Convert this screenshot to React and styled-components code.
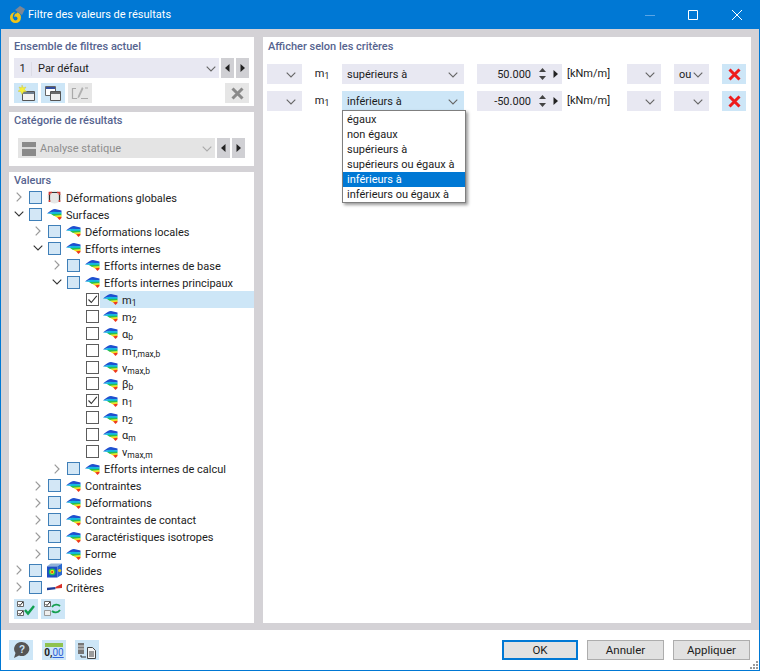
import React from "react";
import styled, {createGlobalStyle} from "styled-components";

const GlobalStyle = createGlobalStyle`
  html, body {
    margin: 0;
    padding: 0;
    background: #fff;
  }
  body {
    font-family: Roboto, "Noto Sans", sans-serif;
    font-size: 11px;
    color: #1c1c1c;
  }
`;

const Chevron = ({color = "#666", size = 10}) => (
  <svg width={size} height={size * 0.6} viewBox="0 0 10 6">
    <path d="M.7.7 5 5 9.3.7" fill="none" stroke={color} strokeWidth="1.1" />
  </svg>
);

const Tri = ({left, color = "#222"}) => (
  <svg width="5" height="8" viewBox="0 0 5 8">
    <path d={left ? "M4.5 0v8L0 4z" : "M.5 0v8L5 4z"} fill={color} />
  </svg>
);

const SurfaceIcon = () => (
  <svg width="15" height="12" viewBox="0 0 15 12">
    <path d="M0 5.500C3 3 6 1 8 1l6.500 1.500v2L6 4z" fill="#1f4fd0" />
    <path d="M0 5.500 6 3.800l8.500.4V6L5 6z" fill="#12b8e0" />
    <path d="M4 6l10.500-.2v1.700L7 8z" fill="#27c24c" />
    <path d="M7 7.800l7.500-.5V9L10 9.500z" fill="#f3e21c" />
    <path d="M10 9.300l4.500-.5V10L12.500 12z" fill="#ee3a1c" />
  </svg>
);

const FrameIcon = () => (
  <svg width="15" height="14" viewBox="0 0 15 14">
    <ellipse cx="7.5" cy="7" rx="7" ry="6.5" fill="#e6e6e6" />
    <path d="M2.5 12V2.5h10V12" fill="none" stroke="#333" strokeWidth="1.2" />
    <path d="M2.5 5V2.5H5M10 2.5h2.500V5M2.500 10v2M12.500 10v2" fill="none" stroke="#d23a34" strokeWidth="1.6" />
  </svg>
);

const SolidIcon = () => (
  <svg width="16" height="15" viewBox="0 0 16 15">
    <path d="M0 3h11v12H0z" fill="#1d4fc4" />
    <path d="M0 3l4-3h12l-5 3z" fill="#8fb2d8" />
    <path d="M11 3l5-3v12l-5 3z" fill="#2a6ad0" />
    <circle cx="5.500" cy="9" r="3.600" fill="#21c05a" />
    <circle cx="5.500" cy="9" r="2.200" fill="#f2dc1e" />
    <circle cx="5.500" cy="9" r="1.100" fill="#e43320" />
    <circle cx="13.500" cy="7.500" r="1.700" fill="#e8c81e" />
  </svg>
);

const CriteriaIcon = () => (
  <svg width="16" height="8" viewBox="0 0 16 8">
    <path d="M0 4.800 9 4v2.400L0 7.500z" fill="#1f3f9a" />
    <path d="M9 4l7-3.600V5L9 5.500z" fill="#d8312a" />
  </svg>
);

const StackIcon = () => (
  <svg width="16" height="15" viewBox="0 0 16 15">
    <path d="M.5.500h10v9h-10z" fill="#fff" stroke="#666" />
    <path d="M1 1h9v2H1z" fill="#334f9f" />
    <path d="M5.500 5.500h10v9h-10z" fill="#eee" stroke="#555" />
    <path d="M6 6h9v2H6z" fill="#6a6a6a" />
  </svg>
);

const NewIcon = () => (
  <svg width="18" height="16" viewBox="0 0 18 16">
    <path d="M5.500 6.500h12v9h-12z" fill="#f1f1f1" stroke="#555" />
    <path d="M6 7h11v2H6z" fill="#6f7f90" />
    <path d="M5 0l1.100 2.800L9 2 7.300 4.600 9.500 6.500 6.600 6.700 5 9.500 3.800 6.700 1 6.300l2.200-2L2 2l2.600.800z" fill="#f6f03a" stroke="#c8c234" strokeWidth=".4" />
  </svg>
);

const RenameIcon = () => (
  <svg width="18" height="15" viewBox="0 0 18 15">
    <path d="M5 2.500H1.500v10H6M10 12.500h7" fill="none" stroke="#aaa" strokeWidth="1.200" />
    <path d="M11 1 7 10l-.5 2.500L8.500 11l4-8.500z" fill="#b0b0b0" />
    <path d="M14 2h3" stroke="#b8b8b8" strokeWidth="1.200" />
  </svg>
);

const BigCross = ({color = "#8a8a8a"}) => (
  <svg width="13" height="13" viewBox="0 0 13 13">
    <path d="M1.500 1.500l10 10M11.500 1.500l-10 10" stroke={color} strokeWidth="3" fill="none" />
  </svg>
);

const CheckAllIcon = () => (
  <svg width="18" height="16" viewBox="0 0 18 16">
    <path d="M.5.500h6v5h-6zM.5 9.500h6v5h-6z" fill="#fff" stroke="#666" />
    <path d="M1.500 3l1.500 1.500L6 1M1.500 12l1.500 1.500L6 10" fill="none" stroke="#222" />
    <path d="M8 9l3 3.500L17 5" fill="none" stroke="#10a050" strokeWidth="2.400" />
  </svg>
);

const CheckSwapIcon = () => (
  <svg width="18" height="16" viewBox="0 0 18 16">
    <path d="M.5.500h6v5h-6z" fill="#fff" stroke="#666" />
    <path d="M.5 9.500h6v5h-6z" fill="#eee" stroke="#999" />
    <path d="M1.500 3l1.500 1.500L6 1" fill="none" stroke="#222" />
    <path d="M8 6c2-3 6-3 8-1M16 9c-2 3-6 3-8 1" fill="none" stroke="#16a050" strokeWidth="1.800" />
  </svg>
);

const HelpIcon = () => (
  <svg width="18" height="16" viewBox="0 0 18 16">
    <path d="M10 0a7.500 7 0 1 1-3 13.500L2 16l1.500-5A7.500 7 0 0 1 10 0z" fill="#555" />
    <text x="7" y="11" fontSize="10" fontWeight="700" fill="#cfe6f8" fontFamily="Liberation Sans">?</text>
  </svg>
);

const DecimalIcon = () => (
  <DecimalWrap>
    <DecimalRuler />
    <DecimalText>0,<u>00</u></DecimalText>
  </DecimalWrap>
);

const ExportIcon = () => (
  <svg width="20" height="17" viewBox="0 0 20 17">
    <path d="M1 1h6v11H1z" fill="#777" />
    <path d="M1 4h6M1 7h6" stroke="#ddd" />
    <path d="M4 13v2h5" fill="none" stroke="#333" />
    <path d="M10.500 5.500h5l3 3v8h-8z" fill="#f3f3f3" stroke="#444" />
    <path d="M12 10h5M12 12h5M12 14h5" stroke="#444" />
  </svg>
);

const Sub = ({children}) => <SubText>{children}</SubText>;

const treeRows = [
  {level: 0, arrow: "right", kind: "frame", label: "Déformations globales"},
  {level: 0, arrow: "down", label: "Surfaces"},
  {level: 1, arrow: "right", label: "Déformations locales"},
  {level: 1, arrow: "down", label: "Efforts internes"},
  {level: 2, arrow: "right", label: "Efforts internes de base"},
  {level: 2, arrow: "down", label: "Efforts internes principaux"},
  {level: 3, leaf: true, checked: true, active: true, label: "m", sub: "1"},
  {level: 3, leaf: true, label: "m", sub: "2"},
  {level: 3, leaf: true, label: "α", sub: "b"},
  {level: 3, leaf: true, label: "m", sub: "T,max,b"},
  {level: 3, leaf: true, label: "v", sub: "max,b"},
  {level: 3, leaf: true, label: "β", sub: "b"},
  {level: 3, leaf: true, checked: true, label: "n", sub: "1"},
  {level: 3, leaf: true, label: "n", sub: "2"},
  {level: 3, leaf: true, label: "α", sub: "m"},
  {level: 3, leaf: true, label: "v", sub: "max,m"},
  {level: 2, arrow: "right", label: "Efforts internes de calcul"},
  {level: 1, arrow: "right", label: "Contraintes"},
  {level: 1, arrow: "right", label: "Déformations"},
  {level: 1, arrow: "right", label: "Contraintes de contact"},
  {level: 1, arrow: "right", label: "Caractéristiques isotropes"},
  {level: 1, arrow: "right", label: "Forme"},
  {level: 0, arrow: "right", kind: "solid", label: "Solides"},
  {level: 0, arrow: "right", kind: "criteria", label: "Critères"},
];

const rowIcons = {frame: FrameIcon, solid: SolidIcon, criteria: CriteriaIcon};

function TreeRow({row}) {
  const Icon = rowIcons[row.kind] || SurfaceIcon;
  return (
    <Row $level={row.level}>
      <Toggle>
        {row.arrow === "right" && (
          <svg width="6" height="10" viewBox="0 0 6 10">
            <path d="M.7.700 5 5 .7 9.300" fill="none" stroke="#9a9a9a" strokeWidth="1.200" />
          </svg>
        )}
        {row.arrow === "down" && <Chevron color="#333" />}
      </Toggle>
      <Check $leaf={row.leaf}>
        {row.checked && (
          <svg width="11" height="11" viewBox="0 0 11 11">
            <path d="M1.500 5.500 4.300 8.500 9.800 1.800" fill="none" stroke="#333" strokeWidth="1.100" />
          </svg>
        )}
      </Check>
      <RowLabel $active={row.active} $leaf={row.leaf}>
        <IconSlot><Icon /></IconSlot>
        <LabelText>
          {row.label}
          {row.sub && <Sub>{row.sub}</Sub>}
        </LabelText>
      </RowLabel>
    </Row>
  );
}

function Criterion({op, value, logic, open}) {
  return (
    <CriterionRow>
      <Select $width={35}><Chevron /></Select>
      <Symbol>m<Sub>1</Sub></Symbol>
      <Select $width={122} $open={open} $between>
        <span>{op}</span>
        <Chevron />
      </Select>
      <NumberBox>
        <span>{value}</span>
        <Spinner>
          <SpinArrow viewBox="0 0 7 4"><path d="M0 4 3.500 0 7 4z" fill="#444" /></SpinArrow>
          <SpinArrow viewBox="0 0 7 4"><path d="M0 0 3.500 4 7 0z" fill="#444" /></SpinArrow>
        </Spinner>
        <Tri />
      </NumberBox>
      <Unit>[kNm/m]</Unit>
      <Select $width={34}><Chevron /></Select>
      <Select $width={35} $between={!!logic} $gapped>
        {logic && <span>{logic}</span>}
        <Chevron />
      </Select>
      <DeleteButton><BigCross color="#ee1c1c" /></DeleteButton>
    </CriterionRow>
  );
}

const options = ["égaux", "non égaux", "supérieurs à", "supérieurs ou égaux à", "inférieurs à", "inférieurs ou égaux à"];

export default function App() {
  return (
    <>
      <GlobalStyle />
      <Win>
        <TitleBar>
          <AppIcon>
            <svg width="16" height="18" viewBox="0 0 16 18">
              <path d="M6 4l5-4 5 3-3 6z" fill="#7d8794" />
              <circle cx="6.500" cy="11.500" r="5.500" fill="#f0c419" />
              <circle cx="6.500" cy="12.500" r="2" fill="#0078d4" />
              <path d="M8 6.500C5 6.500 4.300 9 4.500 12.500" fill="none" stroke="#0078d4" strokeWidth="1.400" />
            </svg>
          </AppIcon>
          <Title>Filtre des valeurs de résultats</Title>
          <WinControls>
            <WinButton>
              <svg width="10" height="10" viewBox="0 0 10 10"><path d="M0 5.500h10" stroke="#5aa5e5" /></svg>
            </WinButton>
            <WinButton>
              <svg width="10" height="10" viewBox="0 0 10 10"><path d="M.5.500h9v9h-9z" fill="none" stroke="#fff" /></svg>
            </WinButton>
            <WinButton>
              <svg width="10" height="10" viewBox="0 0 10 10"><path d="M0 0l10 10M10 0 0 10" stroke="#fff" /></svg>
            </WinButton>
          </WinControls>
        </TitleBar>

        <Body>
          <LeftColumn>
            <FilterPanel>
              <PanelTitle>Ensemble de filtres actuel</PanelTitle>
              <ComboRow>
                <Combo>
                  <ComboIndex>1</ComboIndex>
                  <ComboText>Par défaut</ComboText>
                  <Chevron />
                </Combo>
                <StepButton><Tri left /></StepButton>
                <StepButton><Tri /></StepButton>
              </ComboRow>
              <ToolRow>
                <ToolButton><NewIcon /></ToolButton>
                <ToolButton><StackIcon /></ToolButton>
                <ToolButton $disabled><RenameIcon /></ToolButton>
                <ToolSpacer />
                <ToolButton $disabled><BigCross /></ToolButton>
              </ToolRow>
            </FilterPanel>

            <CategoryPanel>
              <PanelTitle>Catégorie de résultats</PanelTitle>
              <CategoryRow>
                <Combo $disabled>
                  <CategoryIcon />
                  <ComboText $disabled>Analyse statique</ComboText>
                  <Chevron color="#aaa" />
                </Combo>
                <StepButton><Tri left /></StepButton>
                <StepButton><Tri /></StepButton>
              </CategoryRow>
            </CategoryPanel>

            <TreePanel>
              <PanelTitle>Valeurs</PanelTitle>
              <Tree>
                {treeRows.map((row, i) => <TreeRow key={i} row={row} />)}
              </Tree>
              <ToolRow $tight>
                <ToolButton><CheckAllIcon /></ToolButton>
                <ToolButton><CheckSwapIcon /></ToolButton>
              </ToolRow>
            </TreePanel>
          </LeftColumn>

          <RightPanel>
            <PanelTitle>Afficher selon les critères</PanelTitle>
            <Criteria>
              <Criterion op="supérieurs à" value="50.000" logic="ou" />
              <Criterion op="inférieurs à" value="-50.000" open />
              <Dropdown>
                {options.map(o => (
                  <Option key={o} $selected={o === "inférieurs à"}>{o}</Option>
                ))}
              </Dropdown>
            </Criteria>
          </RightPanel>
        </Body>

        <Footer>
          <FooterTools>
            <ToolButton><HelpIcon /></ToolButton>
            <ToolButton><DecimalIcon /></ToolButton>
            <ToolButton><ExportIcon /></ToolButton>
          </FooterTools>
          <FooterButtons>
            <DialogButton $primary>OK</DialogButton>
            <DialogButton>Annuler</DialogButton>
            <DialogButton>Appliquer</DialogButton>
          </FooterButtons>
          <Grip>
            <svg width="8" height="8" viewBox="0 0 8 8" fill="#9a9a9a">
              <path d="M6 0h2v2H6zM3 3h2v2H3zM6 3h2v2H6zM0 6h2v2H0zM3 6h2v2H3zM6 6h2v2H6z" />
            </svg>
          </Grip>
        </Footer>
      </Win>
    </>
  );
}

const Win = styled.div`
  width: 760px;
  height: 671px;
  box-sizing: border-box;
  border: 1px solid #0078d4;
  border-top: 0;
  display: flex;
  flex-direction: column;
  background: #fff;
  overflow: hidden;
`;
const TitleBar = styled.div`
  height: 29px;
  flex: none;
  background: #0078d4;
  color: #fff;
  display: flex;
  align-items: center;
  padding-left: 8px;
`;
const AppIcon = styled.div`
  width: 19px;
  height: 18px;
  display: flex;
`;
const Title = styled.div`
  font-size: 11px;
  flex: 1;
`;
const WinControls = styled.div`
  display: flex;
`;
const WinButton = styled.div`
  width: 43px;
  height: 29px;
  display: flex;
  align-items: center;
  justify-content: center;
  &:last-child {
    width: 45px;
  }
`;
const Body = styled.div`
  flex: 1;
  min-height: 0;
  background: #d4d2d6;
  padding: 8px 8px 7px;
  display: grid;
  grid-template-columns: 245px 488px;
  column-gap: 9px;
`;
const LeftColumn = styled.div`
  display: flex;
  flex-direction: column;
  gap: 6px;
  min-height: 0;
`;
const Panel = styled.div`
  background: #fff;
  padding: 3px 5px 0;
  box-sizing: border-box;
`;
const FilterPanel = styled(Panel)`
  height: 69px;
`;
const CategoryPanel = styled(Panel)`
  height: 54px;
  padding-top: 2px;
`;
const TreePanel = styled(Panel)`
  flex: 1;
  min-height: 0;
  padding: 2px 0 0;
`;
const RightPanel = styled(Panel)`
  padding-left: 5px;
`;
const PanelTitle = styled.div`
  font-size: 11px;
  font-weight: 500;
  line-height: 14px;
  color: #56648f;
  ${TreePanel} & {
    padding-left: 5px;
  }
`;
const ComboRow = styled.div`
  display: flex;
  height: 20px;
  margin-top: 4px;
  gap: 2px;
`;
const CategoryRow = styled(ComboRow)`
  margin: 10px 4px 0 4px;
`;
const Combo = styled.div`
  flex: 1;
  background: ${p => (p.$disabled ? "#e4e4e4" : "#e8e8f2")};
  display: flex;
  align-items: center;
  padding: 1px 3px 0 ${p => (p.$disabled ? "4px" : "0")};
`;
const ComboIndex = styled.div`
  width: 17px;
  margin-right: 6px;
  text-align: center;
  line-height: 14px;
  border-right: 1px solid #dcdce6;
`;
const ComboText = styled.div`
  flex: 1;
  color: ${p => (p.$disabled ? "#8e8e8e" : "#1c1c1c")};
`;
const CategoryIcon = styled.div`
  width: 14px;
  height: 14px;
  margin-right: 4px;
  background: linear-gradient(#8a8a8a 0 35%, #d8d8d8 35% 50%, #8a8a8a 50% 100%);
`;
const StepButton = styled.div`
  width: 13px;
  flex: none;
  background: #d0d0d4;
  display: flex;
  align-items: center;
  justify-content: center;
`;
const ToolRow = styled.div`
  display: flex;
  gap: 3px;
  margin-top: ${p => (p.$tight ? "2px" : "5px")};
  padding-left: ${p => (p.$tight ? "5px" : "0")};
`;
const ToolSpacer = styled.div`
  flex: 1;
`;
const ToolButton = styled.div`
  width: 24px;
  height: 20px;
  background: ${p => (p.$disabled ? "#e6e6e6" : "#cde6f7")};
  display: flex;
  align-items: center;
  justify-content: center;
  flex: none;
`;
const Tree = styled.div`
  margin-top: 1px;
  height: 408px;
`;
const Row = styled.div`
  height: 16.96px;
  display: flex;
  align-items: center;
  padding-left: ${p => 5 + p.$level * 19}px;
`;
const Toggle = styled.div`
  width: 15px;
  height: 17px;
  flex: none;
  display: flex;
  align-items: center;
  justify-content: center;
  position: relative;
  left: -3px;
`;
const Check = styled.div`
  width: 13px;
  height: 13px;
  box-sizing: border-box;
  flex: none;
  border: ${p => (p.$leaf ? "1px solid #5c5c5c" : "1.5px solid #3f7fb8")};
  background: ${p => (p.$leaf ? "#fff" : "#d3e7f6")};
  display: flex;
  align-items: center;
  justify-content: center;
`;
const RowLabel = styled.div`
  flex: 1;
  height: 17px;
  margin-left: ${p => (p.$leaf ? "1px" : "0")};
  padding-left: ${p => (p.$leaf ? "3px" : "5px")};
  display: flex;
  align-items: center;
  background: ${p => (p.$active ? "#cde6f7" : "transparent")};
  white-space: nowrap;
`;
const IconSlot = styled.div`
  width: 15px;
  margin-right: 4px;
  display: flex;
  align-items: center;
  justify-content: center;
  flex: none;
`;
const LabelText = styled.span`
  display: block;
  padding-top: 2px;
`;
const SubText = styled.span`
  font-size: 8.5px;
  position: relative;
  top: 2px;
`;
const Criteria = styled.div`
  position: relative;
  margin-top: 10px;
  margin-left: -1px;
  display: flex;
  flex-direction: column;
  gap: 7px;
`;
const CriterionRow = styled.div`
  height: 20px;
  display: flex;
  align-items: stretch;
`;
const Select = styled.div`
  width: ${p => p.$width}px;
  flex: none;
  box-sizing: border-box;
  margin-left: ${p => (p.$gapped ? "13px" : "0")};
  background: ${p => (p.$open ? "#cde6f7" : "#e8e8f2")};
  display: flex;
  align-items: center;
  justify-content: ${p => (p.$between ? "space-between" : "flex-end")};
  padding: 1px 3px 0 5px;
  svg {
    margin-right: 3px;
  }
`;
const Symbol = styled.div`
  width: 40px;
  flex: none;
  display: flex;
  align-items: baseline;
  justify-content: center;
  line-height: 20px;
  box-sizing: border-box;
`;
const NumberBox = styled.div`
  width: 85px;
  flex: none;
  margin-left: 13px;
  background: #e8e8f2;
  display: flex;
  align-items: center;
  justify-content: flex-end;
  padding-right: 4px;
  box-sizing: border-box;
`;
const Spinner = styled.div`
  display: flex;
  flex-direction: column;
  gap: 4px;
  margin: 0 7px 0 8px;
`;
const SpinArrow = styled.svg`
  width: 7px;
  height: 4px;
  display: block;
`;
const Unit = styled.div`
  width: 65px;
  flex: none;
  line-height: 20px;
  padding-left: 5px;
  box-sizing: border-box;
`;
const DeleteButton = styled.div`
  width: 24px;
  flex: none;
  margin-left: 13px;
  background: #cde6f7;
  display: flex;
  align-items: center;
  justify-content: center;
`;
const Dropdown = styled.div`
  position: absolute;
  left: 75px;
  top: 46px;
  width: 124px;
  height: 93px;
  padding-top: 1px;
  box-sizing: border-box;
  background: #fff;
  border: 1px solid #7f7f7f;
  box-shadow: 2px 2px 3px rgba(0, 0, 0, 0.4);
  z-index: 5;
`;
const Option = styled.div`
  height: 15px;
  line-height: 15px;
  padding-left: 4px;
  white-space: nowrap;
  background: ${p => (p.$selected ? "#0078d4" : "#fff")};
  color: ${p => (p.$selected ? "#fff" : "#1c1c1c")};
`;
const Footer = styled.div`
  height: 40px;
  flex: none;
  position: relative;
  display: flex;
  align-items: center;
  justify-content: space-between;
  padding: 0 9px 0 8px;
  background: #fff;
`;
const FooterTools = styled.div`
  display: flex;
  gap: 9px;
`;
const FooterButtons = styled.div`
  display: flex;
  gap: 9px;
`;
const DialogButton = styled.div`
  width: ${p => (p.$primary ? "76px" : "77px")};
  height: 20px;
  box-sizing: border-box;
  background: #e1e1e1;
  border: ${p => (p.$primary ? "2px solid #0078d4" : "1px solid #adadad")};
  display: flex;
  align-items: center;
  justify-content: center;
  font-size: 11.5px;
`;
const Grip = styled.div`
  position: absolute;
  right: 1px;
  bottom: 1px;
  display: flex;
`;
const DecimalWrap = styled.div`
  width: 20px;
  display: flex;
  flex-direction: column;
  align-items: center;
`;
const DecimalRuler = styled.div`
  width: 18px;
  height: 4px;
  background: #8fc24f;
`;
const DecimalText = styled.div`
  font-size: 10px;
  line-height: 11px;
  font-weight: 700;
  color: #222;
  u {
    color: #2f62d8;
    font-weight: 400;
  }
`;
